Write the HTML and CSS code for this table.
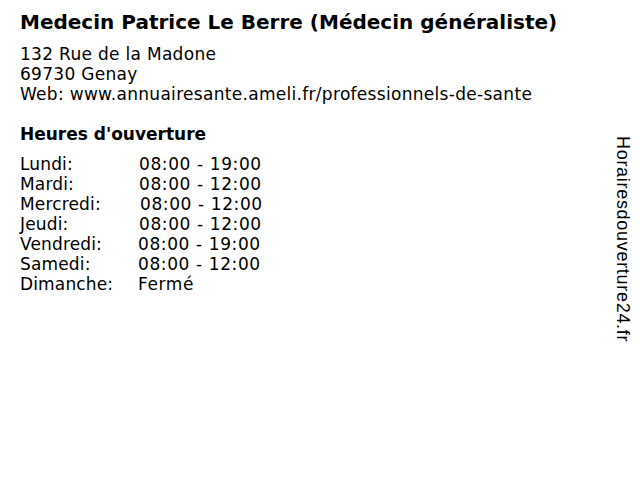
FILE: index.html
```html
<!DOCTYPE html>
<html>
<head>
<meta charset="utf-8">
<link rel="stylesheet" href="styles.css">
</head>
<body>
<div class="page">
  <main class="info">
    <h1 class="title">Medecin Patrice Le Berre (Médecin généraliste)</h1>
    <div class="address">
      <div>132 Rue de la Madone</div>
      <div>69730 Genay</div>
      <div>Web: www.annuairesante.ameli.fr/professionnels-de-sante</div>
    </div>
    <h2 class="hours-title">Heures d'ouverture</h2>
    <div class="hours">
      <span class="day">Lundi:</span><span class="time">08:00 - 19:00</span>
      <span class="day">Mardi:</span><span class="time">08:00 - 12:00</span>
      <span class="day">Mercredi:</span><span class="time shift1">08:00 - 12:00</span>
      <span class="day">Jeudi:</span><span class="time">08:00 - 12:00</span>
      <span class="day">Vendredi:</span><span class="time shiftm1">08:00 - 19:00</span>
      <span class="day">Samedi:</span><span class="time shiftm1">08:00 - 12:00</span>
      <span class="day">Dimanche:</span><span class="time shiftm1">Fermé</span>
    </div>
  </main>
  <aside class="brand">Horairesdouverture24.fr</aside>
</div>
</body>
</html>
```
FILE: styles.css
```css
html, body {
  margin: 0;
  padding: 0;
  background: #fff;
}
.page {
  width: 640px;
  height: 480px;
  display: flex;
  justify-content: space-between;
  font-family: "DejaVu Sans", sans-serif;
  color: #000;
}
.info {
  padding: 10px 0 0 20px;
}
.title {
  margin: 0;
  font-size: 20px;
  font-weight: bold;
  line-height: 24px;
}
.address {
  margin-top: 10px;
  font-size: 17px;
  letter-spacing: 0.3px;
  line-height: 20px;
}
.hours-title {
  margin: 20px 0 0 0;
  font-size: 17px;
  font-weight: bold;
  line-height: 20px;
}
.hours {
  margin-top: 10px;
  display: grid;
  grid-template-columns: 119px auto;
  font-size: 17px;
  line-height: 20px;
}
.day { letter-spacing: 0.15px; white-space: nowrap; }
.time { letter-spacing: 0.6px; white-space: nowrap; }
.shift1 { margin-left: 1px; }
.shiftm1 { margin-left: -1px; }
.brand {
  writing-mode: vertical-rl;
  font-family: "Liberation Sans", Arial, sans-serif;
  font-size: 18px;
  letter-spacing: 0.7px;
  line-height: 20px;
  margin: 136px 7px 0 0;
  align-self: flex-start;
}
```
